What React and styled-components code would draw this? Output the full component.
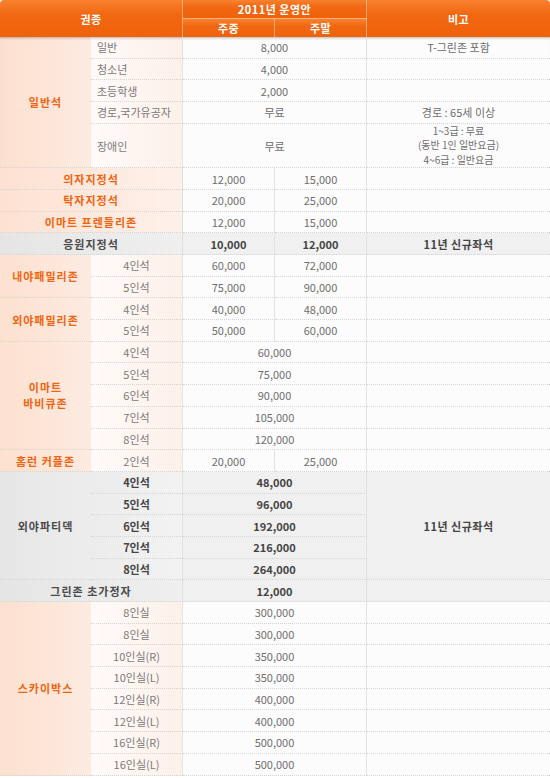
import React from 'react'
import styled, { createGlobalStyle, css } from 'styled-components'

const Global = createGlobalStyle`
  body {
    margin: 0;
    background: #fff;
    font-family: "Noto Sans CJK KR", "Noto Sans", sans-serif;
    font-size: 11px;
    color: #6e6e6e;
  }
`

const Table = styled.table`
  width: 550px;
  table-layout: fixed;
  border-collapse: separate;
  border-spacing: 0;

  tbody tr:first-child td {
    box-shadow: inset 0 3px 3px -2px rgba(0, 0, 0, 0.28);
  }
`

const Row = styled.tr`
  height: ${p => p.$h}px;
`

const Head = styled.th`
  padding: 0;
  background: linear-gradient(#f7822f, #f26711 40%, #ef620c);
  color: #fff;
  font-weight: bold;
  font-size: 11px;
  letter-spacing: 0.5px;
  text-align: center;
  vertical-align: middle;
  ${p => p.$right && css`border-right: 1px solid rgba(255, 220, 190, 0.55);`}
  ${p => p.$bottom && css`border-bottom: 1px solid rgba(255, 220, 190, 0.55);`}
  ${p => p.$corner === 'left' && css`border-top-left-radius: 4px;`}
  ${p => p.$corner === 'right' && css`border-top-right-radius: 4px;`}
`

const cellBase = css`
  padding: 0;
  border-bottom: 1px dotted #d4d4d4;
  vertical-align: middle;
  text-align: center;
  white-space: nowrap;
`

const Cat = styled.td`
  ${cellBase}
  font-weight: bold;
  font-size: 11px;
  letter-spacing: 1px;
  line-height: 16px;
  color: ${p => (p.$tone === 'gray' ? '#4a4a4a' : '#f0640f')};
  background: ${p =>
    p.$tone === 'gray'
      ? 'linear-gradient(to right, #e6e6e6, #ededed)'
      : 'linear-gradient(to right, #fde0cf, #fdebe1)'};
  ${p => p.colSpan === 2 && css`
    border-right: 1px solid #e2dcd8;
    background: ${p.$tone === 'gray'
      ? 'linear-gradient(to right, #e5e5e5, #efefef)'
      : 'linear-gradient(to right, #fde1d1, #fef1ea)'};
  `}
`

const Sub = styled.td`
  ${cellBase}
  border-right: 1px solid #e2e2e2;
  text-align: ${p => (p.$left ? 'left' : 'center')};
  padding-left: ${p => (p.$left ? '6px' : '0')};
  color: ${p => (p.$tone === 'gray' ? '#444' : '#7a7a7a')};
  font-weight: ${p => (p.$tone === 'gray' ? 'bold' : 'normal')};
  background: ${p =>
    p.$tone === 'gray'
      ? 'linear-gradient(to right, #ececec, #f2f2f2)'
      : 'linear-gradient(to right, #fffaf8, #fdf0e9)'};
`

const Val = styled.td`
  ${cellBase}
  border-right: 1px solid #e2e2e2;
  color: ${p => (p.$tone === 'gray' ? '#444' : '#6e6e6e')};
  font-weight: ${p => (p.$tone === 'gray' ? 'bold' : 'normal')};
  background: ${p => (p.$tone === 'gray' ? '#f0f0f0' : '#fdfcfc')};
`

const Note = styled.td`
  ${cellBase}
  font-size: ${p => (p.$multi ? '10px' : '11px')};
  line-height: ${p => (p.$multi ? '14.5px' : 'normal')};
  color: ${p => (p.$tone === 'gray' ? '#444' : '#6e6e6e')};
  font-weight: ${p => (p.$tone === 'gray' ? 'bold' : 'normal')};
  letter-spacing: ${p => (p.$tone === 'gray' ? '0.5px' : '0')};
  background: ${p => (p.$tone === 'gray' ? '#f0f0f0' : '#fdfcfc')};
`

const ROW = 21.7

const groups = [
  {
    label: '일반석',
    left: true,
    rows: [
      { sub: '일반', price: '8,000', note: 'T-그린존 포함' },
      { sub: '청소년', price: '4,000' },
      { sub: '초등학생', price: '2,000' },
      { sub: '경로,국가유공자', price: '무료', note: '경로 : 65세 이상' },
      {
        sub: '장애인',
        price: '무료',
        tall: true,
        note: ['1~3급 : 무료', '(동반 1인 일반요금)', '4~6급 : 일반요금'],
      },
    ],
  },
  { label: '의자지정석', rows: [{ wd: '12,000', we: '15,000' }] },
  { label: '탁자지정석', rows: [{ wd: '20,000', we: '25,000' }] },
  { label: '이마트 프렌들리존', rows: [{ wd: '12,000', we: '15,000' }] },
  { label: '응원지정석', tone: 'gray', rows: [{ wd: '10,000', we: '12,000', note: '11년 신규좌석' }] },
  {
    label: '내야패밀리존',
    rows: [
      { sub: '4인석', wd: '60,000', we: '72,000' },
      { sub: '5인석', wd: '75,000', we: '90,000' },
    ],
  },
  {
    label: '외야패밀리존',
    rows: [
      { sub: '4인석', wd: '40,000', we: '48,000' },
      { sub: '5인석', wd: '50,000', we: '60,000' },
    ],
  },
  {
    label: ['이마트', '바비큐존'],
    rows: [
      { sub: '4인석', price: '60,000' },
      { sub: '5인석', price: '75,000' },
      { sub: '6인석', price: '90,000' },
      { sub: '7인석', price: '105,000' },
      { sub: '8인석', price: '120,000' },
    ],
  },
  { label: '홈런 커플존', rows: [{ sub: '2인석', wd: '20,000', we: '25,000' }] },
  {
    label: '외야파티덱',
    tone: 'gray',
    note: '11년 신규좌석',
    rows: [
      { sub: '4인석', price: '48,000' },
      { sub: '5인석', price: '96,000' },
      { sub: '6인석', price: '192,000' },
      { sub: '7인석', price: '216,000' },
      { sub: '8인석', price: '264,000' },
    ],
  },
  { label: '그린존 초가정자', tone: 'gray', rows: [{ price: '12,000' }] },
  {
    label: '스카이박스',
    rows: [
      { sub: '8인실', price: '300,000' },
      { sub: '8인실', price: '300,000' },
      { sub: '10인실(R)', price: '350,000' },
      { sub: '10인실(L)', price: '350,000' },
      { sub: '12인실(R)', price: '400,000' },
      { sub: '12인실(L)', price: '400,000' },
      { sub: '16인실(R)', price: '500,000' },
      { sub: '16인실(L)', price: '500,000' },
    ],
  },
]

const Lines = ({ text }) =>
  Array.isArray(text)
    ? text.map((t, i) => (
        <React.Fragment key={i}>
          {i > 0 && <br />}
          {t}
        </React.Fragment>
      ))
    : text || null

const App = () => {
  return (
    <>
      <Global />
      <Table>
        <colgroup>
          <col style={{ width: 91 }} />
          <col style={{ width: 92 }} />
          <col style={{ width: 92 }} />
          <col style={{ width: 92 }} />
          <col style={{ width: 183 }} />
        </colgroup>
        <thead>
          <Row $h={19}>
            <Head colSpan={2} rowSpan={2} $corner="left" $right>권종</Head>
            <Head colSpan={2} $right $bottom>2011년 운영안</Head>
            <Head rowSpan={2} $corner="right">비고</Head>
          </Row>
          <Row $h={18}>
            <Head $right>주중</Head>
            <Head $right>주말</Head>
          </Row>
        </thead>
        <tbody>
          {groups.map((g, gi) =>
            g.rows.map((r, i) => (
              <Row key={`${gi}-${i}`} $h={r.tall ? 44 : ROW}>
                {i === 0 && (
                  <Cat rowSpan={g.rows.length} colSpan={r.sub ? 1 : 2} $tone={g.tone}>
                    <Lines text={g.label} />
                  </Cat>
                )}
                {r.sub && (
                  <Sub $left={g.left} $tone={g.tone}>
                    {r.sub}
                  </Sub>
                )}
                {r.price ? (
                  <Val colSpan={2} $tone={g.tone}>{r.price}</Val>
                ) : (
                  <>
                    <Val $tone={g.tone}>{r.wd}</Val>
                    <Val $tone={g.tone}>{r.we}</Val>
                  </>
                )}
                {g.note ? (
                  i === 0 && (
                    <Note rowSpan={g.rows.length} $tone={g.tone}>
                      {g.note}
                    </Note>
                  )
                ) : (
                  <Note $tone={g.tone} $multi={Array.isArray(r.note)}>
                    <Lines text={r.note} />
                  </Note>
                )}
              </Row>
            ))
          )}
        </tbody>
      </Table>
    </>
  )
}

export default App
